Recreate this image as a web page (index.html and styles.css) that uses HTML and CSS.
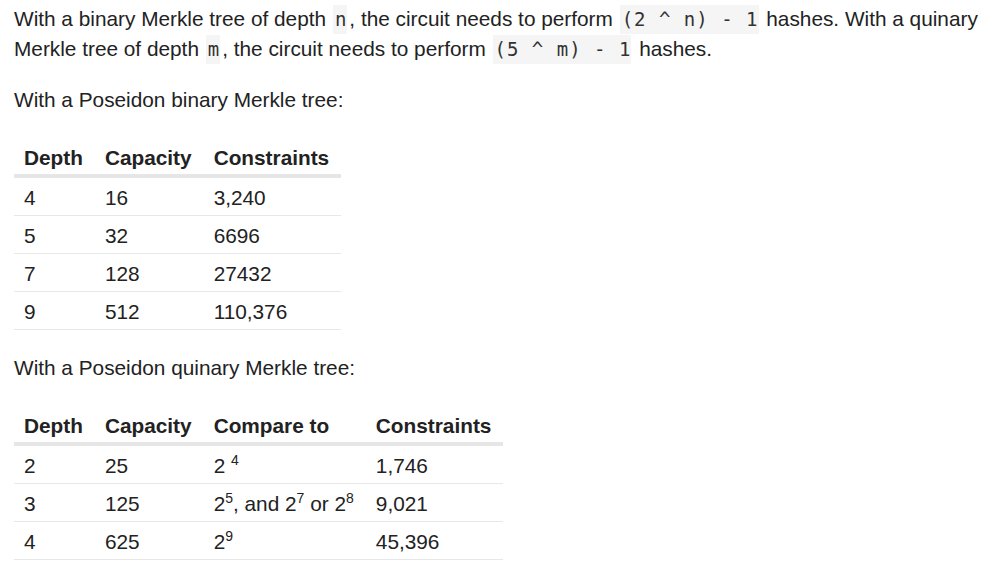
FILE: index.html
```html
<!DOCTYPE html>
<html>
<head>
<meta charset="utf-8">
<link rel="stylesheet" href="styles.css">
</head>
<body>
<div class="doc">
  <p>With a binary Merkle tree of depth <code>n</code>, the circuit needs to perform <code>(2 ^ n) - 1</code> hashes. With a quinary Merkle tree of depth <code>m</code>, the circuit needs to perform <code>(5 ^ m) - 1</code> hashes.</p>
  <p>With a Poseidon binary Merkle tree:</p>
  <table class="tbl">
    <thead>
      <tr><th>Depth</th><th>Capacity</th><th>Constraints</th></tr>
    </thead>
    <tbody>
      <tr><td>4</td><td>16</td><td>3,240</td></tr>
      <tr><td>5</td><td>32</td><td>6696</td></tr>
      <tr><td>7</td><td>128</td><td>27432</td></tr>
      <tr><td>9</td><td>512</td><td>110,376</td></tr>
    </tbody>
  </table>
  <p>With a Poseidon quinary Merkle tree:</p>
  <table class="tbl">
    <thead>
      <tr><th>Depth</th><th>Capacity</th><th>Compare to</th><th>Constraints</th></tr>
    </thead>
    <tbody>
      <tr><td>2</td><td>25</td><td>2 <sup>4</sup></td><td>1,746</td></tr>
      <tr><td>3</td><td>125</td><td>2<sup>5</sup>, and 2<sup>7</sup> or 2<sup>8</sup></td><td>9,021</td></tr>
      <tr><td>4</td><td>625</td><td>2<sup>9</sup></td><td>45,396</td></tr>
    </tbody>
  </table>
</div>
</body>
</html>
```
FILE: styles.css
```css
html, body {
  margin: 0;
  padding: 0;
  background: #ffffff;
}
.doc {
  padding: 4px 14px 0 14px;
  width: 968px;
  font-family: "Liberation Sans", Arial, sans-serif;
  font-size: 20.8px;
  line-height: 29px;
  color: #222222;
}
.doc p {
  margin: 0 0 21px 0;
}
code {
  font-family: "DejaVu Sans Mono", monospace;
  font-size: 19px;
  letter-spacing: 1px;
  background: #f5f5f5;
  color: #333333;
  padding: 3px 0 4px 2px;
  margin: 0 2px 0 1px;
}
.tbl {
  border-collapse: collapse;
  margin: 25px 0 23px 0;
}
.tbl th {
  text-align: left;
  font-weight: bold;
  line-height: 21px;
  padding: 8px 12px 6px 10px;
  border-bottom: 4px solid #e6e6e6;
}
.tbl td {
  line-height: 21px;
  padding: 9px 12px 7px 10px;
  border-bottom: 1px solid #e8e8e8;
}
.tbl sup {
  font-size: 14px;
  line-height: 0;
}
```
